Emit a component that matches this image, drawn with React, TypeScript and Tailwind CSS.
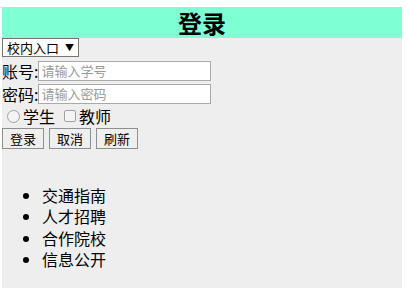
import React from 'react';

const links = ['交通指南', '人才招聘', '合作院校', '信息公开'];

const App: React.FC = () => {
  return (
    <div className="w-[407px] h-[288px] overflow-hidden bg-white pt-[7px] pl-[2px] font-['Noto_Sans_CJK_SC',sans-serif] text-black">
      <div className="w-[400px] h-[281px] bg-[#eeeeee]">
        {/* 标题 */}
        <div className="h-[31px] bg-[#7fffd4] text-center text-[24px] font-bold leading-[31px]">登录</div>

        {/* 入口选择 */}
        <div className="flex h-[19px] w-[77px] items-center justify-between border border-[#767676] bg-white pl-[4px] pr-[4px] text-[13px] leading-none">
          <span>校内入口</span>
          <span className="text-[9px]">▼</span>
        </div>

        <div className="mt-[4px] flex h-[20px] items-center text-[16px]">
          <span>账号:</span>
          <div className="h-[20px] w-[173px] border border-[#a9a9a9] bg-white pl-[2px] text-[13px] leading-[18px] text-[#9a9a9a]">请输入学号</div>
        </div>
        <div className="mt-[3px] flex h-[20px] items-center text-[16px]">
          <span>密码:</span>
          <div className="h-[20px] w-[173px] border border-[#a9a9a9] bg-white pl-[2px] text-[13px] leading-[18px] text-[#9a9a9a]">请输入密码</div>
        </div>

        {/* 身份 */}
        <div className="mt-[3px] flex h-[18px] items-center text-[16px]">
          <span className="ml-[5px] mr-[3px] h-[13px] w-[13px] rounded-full border border-[#a0a0a0] bg-[#f4f4f4]"></span>
          <span>学生</span>
          <span className="ml-[9px] mr-[3px] h-[12px] w-[12px] rounded-[2px] border border-[#a0a0a0] bg-[#f4f4f4]"></span>
          <span>教师</span>
        </div>

        <div className="mt-[3px] flex gap-[5px]">
          {['登录', '取消', '刷新'].map(b => (
            <div key={b} className="flex h-[21px] w-[42px] items-center justify-center border border-[#8f8f8f] bg-[#efefef] text-[13px]">{b}</div>
          ))}
        </div>

        <ul className="mt-[36px] list-disc pl-[40px] text-[16px] leading-[21.33px]">
          {links.map(l => <li key={l}>{l}</li>)}
        </ul>
      </div>
    </div>
  );
};

export default App;
